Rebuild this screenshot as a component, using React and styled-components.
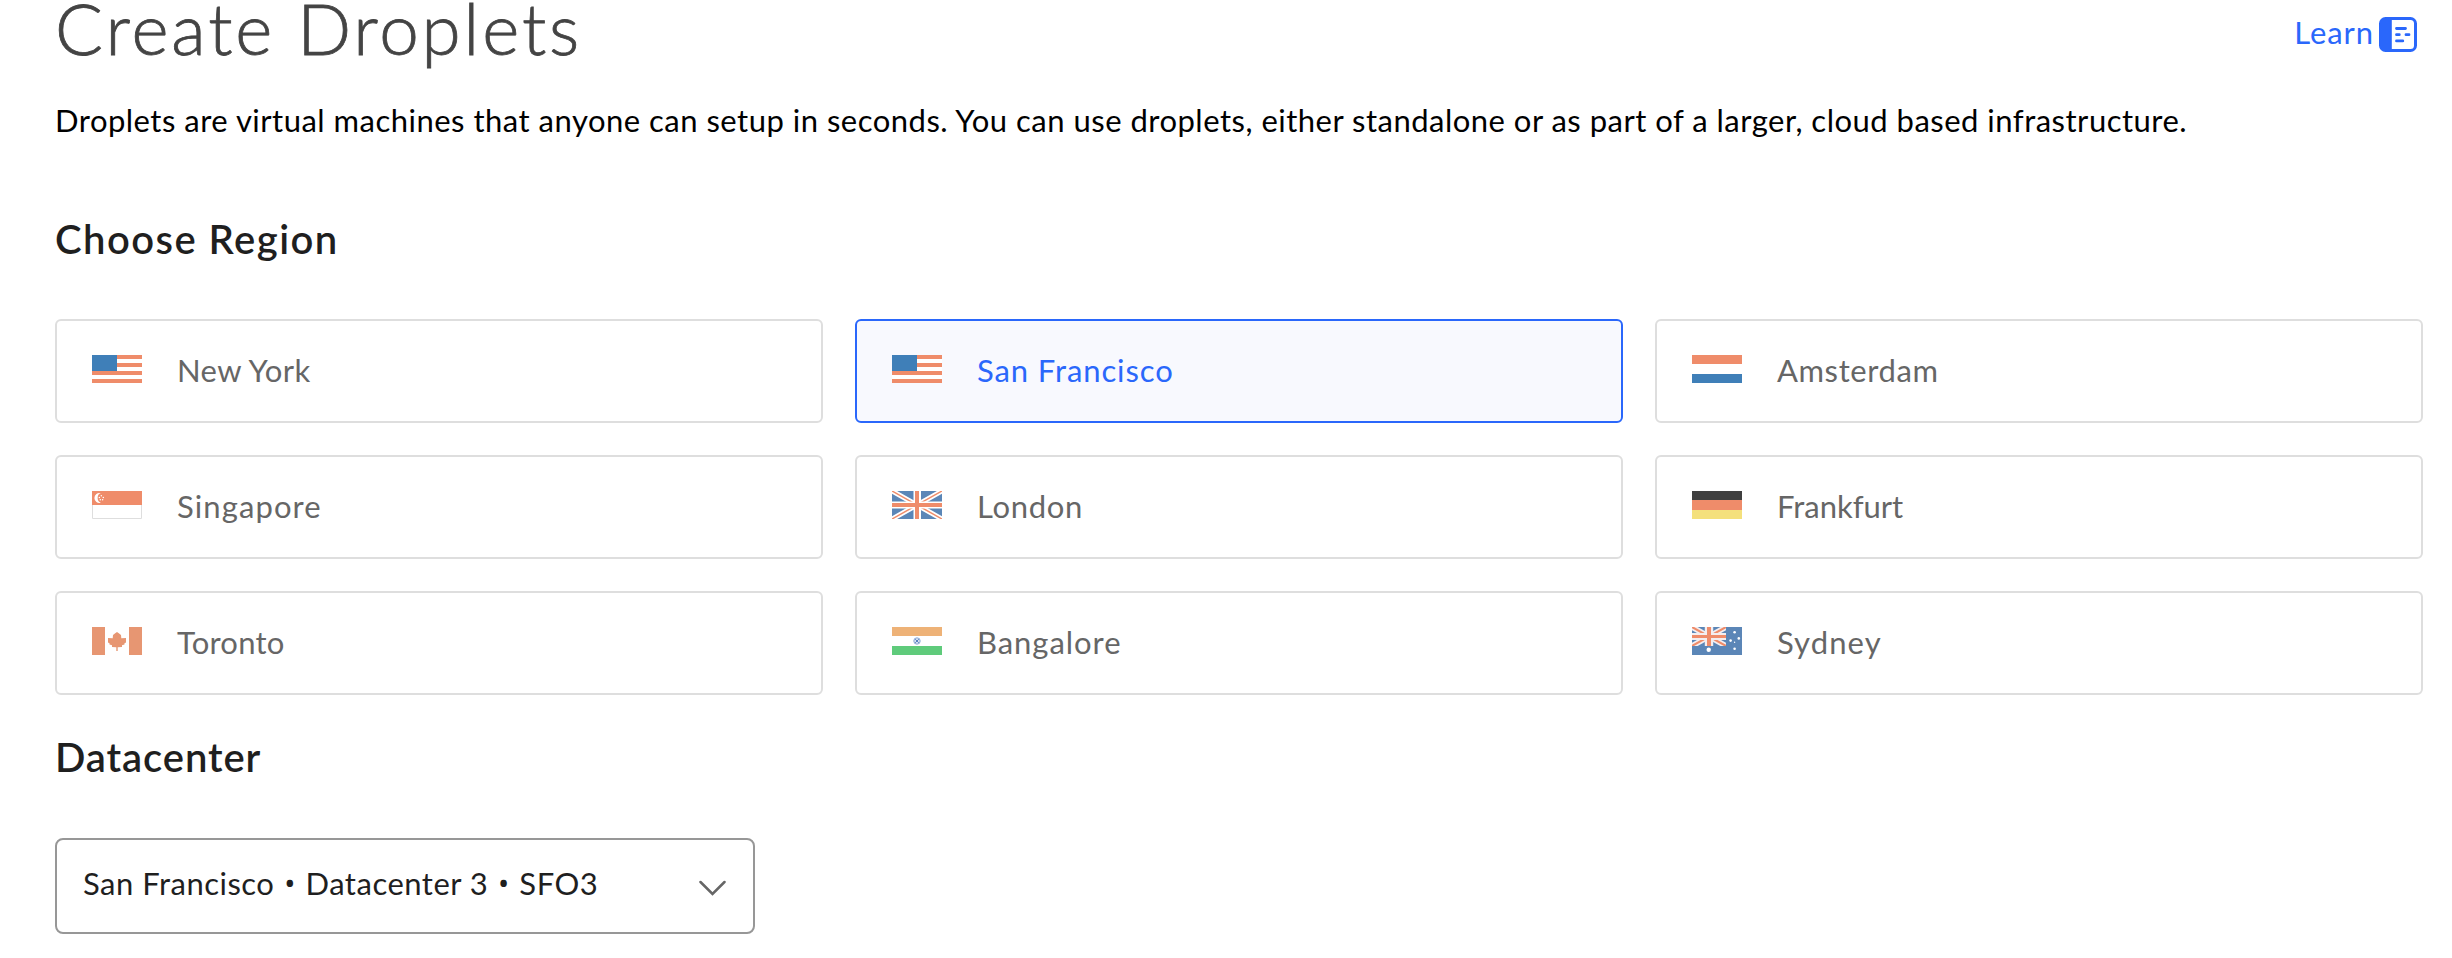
import React from "react";
import styled, { createGlobalStyle } from "styled-components";

const GlobalStyle = createGlobalStyle`
	* {
		box-sizing: border-box;
	}
	body {
		margin: 0;
		background-color: #fff;
		font-family: Lato, "Open Sans", sans-serif;
	}
`;

const Page = styled.main`
	width: 2423px;
	padding-left: 55px;
`;

const Header = styled.header`
	display: flex;
	align-items: flex-start;
	justify-content: space-between;
	height: 55px;
	padding-right: 6px;
`;

const Title = styled.h1`
	margin: 0;
	color: #444;
	font-size: 71px;
	font-weight: 300;
	line-height: 56px;
	letter-spacing: 2.85px;
	white-space: nowrap;
	-webkit-text-stroke: 0.8px #444;
`;

const LearnLink = styled.a`
	display: flex;
	align-items: center;
	gap: 5px;
	margin-top: 12px;
	color: #2a67fb;
	font-size: 31px;
	line-height: 40px;
	letter-spacing: 0.9px;
	cursor: pointer;
`;

const LearnIcon = styled.svg`
	display: block;
	margin-top: 5px;
`;

const Description = styled.p`
	margin: 45px 0 0;
	color: #000;
	font-size: 31px;
	line-height: 40px;
	letter-spacing: 0.49px;
	white-space: nowrap;
`;

const SectionTitle = styled.h2`
	margin: ${(p) => p.$top}px 0 0;
	color: #1f1f1f;
	font-size: 40px;
	font-weight: 600;
	line-height: 48px;
	letter-spacing: ${(p) => p.$tracking}px;
`;

const RegionGrid = styled.div`
	display: grid;
	grid-template-columns: repeat(3, 1fr);
	grid-auto-rows: 104px;
	gap: 32px;
	margin-top: 56px;
`;

const RegionCard = styled.button`
	display: flex;
	align-items: center;
	gap: 35px;
	padding: 0 35px 4px;
	border: 2px solid ${(p) => (p.$selected ? "#2a67fb" : "#dedede")};
	border-radius: 6px;
	background-color: ${(p) => (p.$selected ? "#f8f9fe" : "#fff")};
	color: ${(p) => (p.$selected ? "#2a67fb" : "#666")};
	font-family: inherit;
	font-size: 31px;
	line-height: 40px;
	letter-spacing: ${(p) => p.$tracking}px;
	cursor: pointer;
`;

const RegionName = styled.span`
	padding-top: 1px;
`;

const FlagSvg = styled.svg`
	display: block;
	flex: none;
	width: 50px;
	height: 28px;
`;

const Select = styled.button`
	display: flex;
	align-items: center;
	justify-content: space-between;
	width: 700px;
	height: 96px;
	margin-top: 57px;
	padding: 0 27px 7px 26px;
	border: 2px solid #979797;
	border-radius: 8px;
	background-color: #fff;
	color: #1f1f1f;
	font-family: inherit;
	font-size: 31px;
	line-height: 40px;
	letter-spacing: 0.5px;
	cursor: pointer;
`;

const Bullet = styled.span`
	margin: 0 1px;
	font-family: "Open Sans", sans-serif;
	line-height: 1;
`;

const Chevron = styled.svg`
	display: block;
	margin-top: 11px;
`;

const RED = "#ef8c6a";
const BLUE = "#3f7fb8";
const NAVY = "#5b86b7";

function UnionJack() {
	return (
		<>
			<path fill={NAVY} d="M0 0h50v28H0z" />
			<path stroke="#fff" strokeWidth="5" d="M0 0l50 28M50 0L0 28" />
			<path stroke={RED} strokeWidth="1.5" d="M0 0l50 28M50 0L0 28" />
			<path fill="#fff" d="M21.5 0h7.5v28h-7.5zM0 10.5h50v7H0z" />
			<path fill={RED} d="M23 0h4v28h-4zM0 12h50v4H0z" />
		</>
	);
}

const flags = {
	us: (
		<>
			<path fill="#fff" d="M0 0h50v28H0z" />
			<path fill={RED} d="M0 0h50v4H0zM0 8h50v4H0zM0 16h50v4H0zM0 24h50v4H0z" />
			<path fill={BLUE} d="M0 0h25v16H0z" />
		</>
	),
	nl: (
		<>
			<path fill={RED} d="M0 0h50v9H0z" />
			<path fill={BLUE} d="M0 19h50v9H0z" />
		</>
	),
	sg: (
		<>
			<path fill="none" stroke="#dedede" d="M.5 10v17.5h49V10" />
			<path fill={RED} d="M0 0h50v14H0z" />
			<path fill="#fff" d="M8.8 2.1A5 5 0 1 0 8.8 11.7A5.2 5.2 0 0 1 8.8 2.1z" />
			<g fill="#fff">
				<circle cx="9.3" cy="4.8" r=".75" />
				<circle cx="7.4" cy="6.4" r=".75" />
				<circle cx="11.3" cy="6.4" r=".75" />
				<circle cx="8.3" cy="8.7" r=".75" />
				<circle cx="10.6" cy="8.7" r=".75" />
			</g>
		</>
	),
	gb: <UnionJack />,
	de: (
		<>
			<path fill="#404040" d="M0 0h50v9H0z" />
			<path fill={RED} d="M0 9h50v10H0z" />
			<path fill="#f4e07c" d="M0 19h50v9H0z" />
		</>
	),
	ca: (
		<>
			<path fill="#e79672" d="M0 0h13v28H0zM37 0h13v28H37z" />
			<path
				fill="#e79672"
				d="M25 5l1.8 1.2L29 8l.3 3.2L34 11v4.5l-1.5.7v1.3L30 18.3V20l-4.3.2V24h-1.4v-3.8L20 20v-1.7l-2.5-.8v-1.3l-1.5-.7V11l4.7.2L21 8l2.2-1.8z"
			/>
		</>
	),
	in: (
		<>
			<path fill="#eeb277" d="M0 0h50v9H0z" />
			<path fill="#5fcb7b" d="M0 19h50v9H0z" />
			<circle cx="25" cy="14" r="3.2" fill="#d5e0f1" stroke="#8eabd8" />
			<path stroke="#6289c6" strokeWidth=".9" d="M23 12l4 4M27 12l-4 4" />
			<circle cx="25" cy="14" r="1" fill="#4f7abf" />
		</>
	),
	au: (
		<>
			<path fill={NAVY} d="M0 0h50v28H0z" />
			<svg width="34" height="19" viewBox="0 0 34 19">
				<path stroke="#f3eef0" strokeWidth="5.5" d="M0 0l34 19M34 0L0 19" />
				<path stroke={RED} strokeWidth="2" d="M0 0l34 19M34 0L0 19" />
				<path fill="#f3eef0" d="M12.8 0h8.4v19h-8.4zM0 6h34v7H0z" />
				<path fill={RED} d="M15 0h4v19h-4zM0 8h34v3H0z" />
			</svg>
			<g fill="#fff">
				<circle cx="16.7" cy="22.8" r="2.2" />
				<circle cx="42.6" cy="5.3" r="1.3" />
				<circle cx="46.8" cy="11.4" r="1.3" />
				<circle cx="38.6" cy="13.6" r="1.3" />
				<circle cx="42.6" cy="15.3" r=".7" />
				<circle cx="42.6" cy="21.7" r="1.3" />
			</g>
		</>
	),
};

const regions = [
	{ name: "New York", flag: "us", tracking: 0.4 },
	{ name: "San Francisco", flag: "us", tracking: 0.9 },
	{ name: "Amsterdam", flag: "nl", tracking: 0.6 },
	{ name: "Singapore", flag: "sg", tracking: 1.1 },
	{ name: "London", flag: "gb", tracking: 0.7 },
	{ name: "Frankfurt", flag: "de", tracking: 0 },
	{ name: "Toronto", flag: "ca", tracking: 0.2 },
	{ name: "Bangalore", flag: "in", tracking: 0.95 },
	{ name: "Sydney", flag: "au", tracking: 1.1 },
];

export default function App() {
	const [selected, setSelected] = React.useState("San Francisco");
	return (
		<>
			<GlobalStyle />
			<Page>
				<Header>
					<Title>Create Droplets</Title>
					<LearnLink>
						Learn
						<LearnIcon width="38" height="35" viewBox="0 0 38 35" fill="none">
							<rect x="1.5" y="1.5" width="35" height="32" rx="5" stroke="#2a67fb" strokeWidth="3" />
							<path fill="#2a67fb" d="M2 3h10.8v29H2z" />
							<path
								stroke="#2a67fb"
								strokeWidth="2.8"
								strokeLinecap="round"
								d="M17.5 11.5h9M17.5 17.7h2.8M27 17.7h3M17.5 23.9h6.3"
							/>
						</LearnIcon>
					</LearnLink>
				</Header>
				<Description>
					Droplets are virtual machines that anyone can setup in seconds. You can use droplets, either
					standalone or as part of a larger, cloud based infrastructure.
				</Description>
				<SectionTitle $top={75} $tracking={1.45}>
					Choose Region
				</SectionTitle>
				<RegionGrid>
					{regions.map((region) => (
						<RegionCard
							key={region.name}
							$selected={region.name === selected}
							$tracking={region.tracking}
							onClick={() => setSelected(region.name)}
						>
							<FlagSvg viewBox="0 0 50 28">{flags[region.flag]}</FlagSvg>
							<RegionName>{region.name}</RegionName>
						</RegionCard>
					))}
				</RegionGrid>
				<SectionTitle $top={38} $tracking={0.9}>
					Datacenter
				</SectionTitle>
				<Select>
					<span>
						San Francisco <Bullet>•</Bullet> Datacenter 3 <Bullet>•</Bullet> SFO3
					</span>
					<Chevron width="27" height="16" viewBox="0 0 27 16" fill="none">
						<path stroke="#666" strokeWidth="2.5" strokeLinecap="round" d="M1.5 2l12 12 12-12" />
					</Chevron>
				</Select>
			</Page>
		</>
	);
}
